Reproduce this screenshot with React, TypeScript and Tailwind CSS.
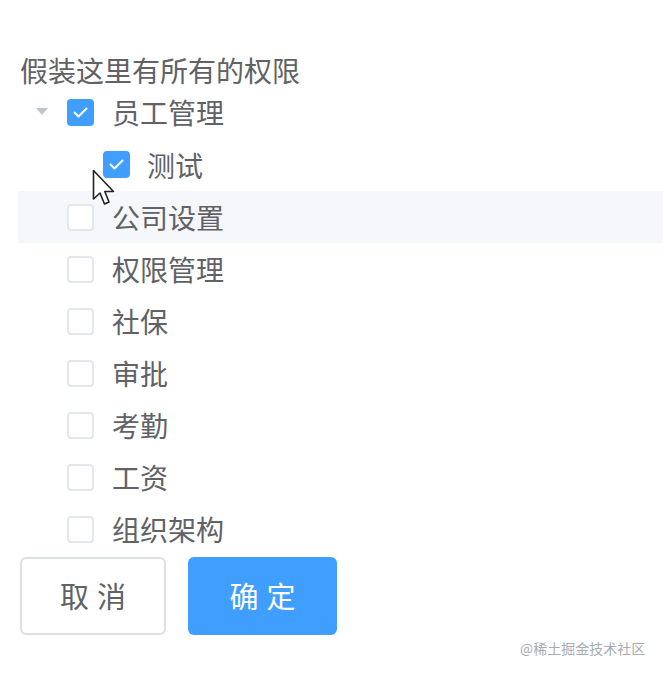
import React from "react";

const font = { fontFamily: '"Noto Sans CJK SC", "Noto Sans", sans-serif' };

function Box({ checked }: { checked: boolean }) {
  return checked ? (
    <div className="w-[27px] h-[27px] rounded-[4px] bg-[#409eff] flex items-center justify-center shrink-0">
      <svg width="27" height="27" viewBox="0 0 27 27">
        <path d="M7.5 13.5 L11.5 17.5 L19.5 9.5" fill="none" stroke="#fff" strokeWidth="2" strokeLinecap="round" strokeLinejoin="round" />
      </svg>
    </div>
  ) : (
    <div className="w-[27px] h-[27px] rounded-[4px] border-2 border-[#e4e7ed] bg-white shrink-0" />
  );
}

const others = ["公司设置", "权限管理", "社保", "审批", "考勤", "工资", "组织架构"];

export default function App() {
  return (
    <div className="relative w-[663px] h-[674px] bg-white overflow-hidden" style={font}>
      <div className="pt-[52px]">
        <div className="pl-[20px] text-[28px] leading-[36px] text-[#606266]">假装这里有所有的权限</div>
        <div className="ml-[18px] -mt-[2px]">
          <div className="flex items-center h-[52px]">
            <div className="w-[49px] flex items-center">
              <svg className="ml-[18px]" width="12" height="8" viewBox="0 0 12 8">
                <path d="M0 0 L12 0 L6 7 Z" fill="#c0c4cc" />
              </svg>
            </div>
            <Box checked />
            <span className="ml-[18px] text-[28px] text-[#606266] leading-none">员工管理</span>
          </div>
          <div className="flex items-center h-[53px]">
            <div className="w-[85px]" />
            <Box checked />
            <span className="ml-[17px] text-[28px] text-[#606266] leading-none">测试</span>
          </div>
          {others.map((t, i) => (
            <div key={t} className={`flex items-center h-[52px] ${i === 0 ? "bg-[#f5f7fa]" : ""}`}>
              <div className="w-[49px]" />
              <Box checked={false} />
              <span className="ml-[18px] text-[28px] text-[#606266] leading-none">{t}</span>
            </div>
          ))}
        </div>
        <div className="flex gap-[22px] pl-[20px] mt-[2px]">
          <div className="w-[146px] h-[78px] rounded-[6px] border-2 border-[#dcdfe6] flex items-center justify-center text-[29px] tracking-[8px] text-[#606266] pl-[8px]">取消</div>
          <div className="w-[149px] h-[78px] rounded-[6px] bg-[#409eff] flex items-center justify-center text-[29px] tracking-[8px] text-white pl-[8px]">确定</div>
        </div>
      </div>
      <div className="absolute left-[520px] top-[638px] text-[14px] text-[#a8abb2] leading-[20px]">@稀土掘金技术社区</div>
      <svg className="absolute left-[92px] top-[169px]" width="26" height="38" viewBox="0 0 26 38">
        <path d="M1.5 1.5 L1.5 30 L8 24 L12.5 35 L17 33 L12.8 22.5 L21.5 22.5 Z" fill="#fff" stroke="#222" strokeWidth="1.6" strokeLinejoin="round" />
      </svg>
    </div>
  );
}
